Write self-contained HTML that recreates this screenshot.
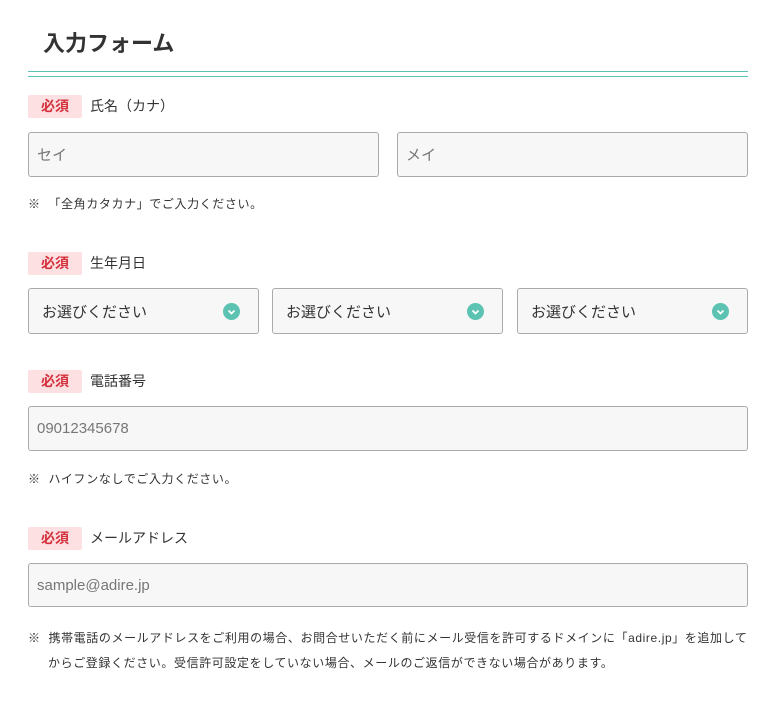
<!DOCTYPE html>
<html><head><meta charset="utf-8"><style>
*{margin:0;padding:0;box-sizing:border-box}
body{width:776px;height:701px;background:#fff;font-family:"Liberation Sans","Noto Sans CJK JP",sans-serif;color:#333;position:relative;overflow:hidden}
h1{position:absolute;left:43px;top:26px;font-size:22px;font-weight:bold;color:#333}
.line{position:absolute;left:28px;width:720px;height:1px;background:#5cc3b2}
.badge{position:absolute;left:28px;width:54px;height:23px;background:#fde0e2;color:#d3323d;font-weight:bold;font-size:14px;line-height:23px;text-align:center;border-radius:2px}
.lbl{position:absolute;left:90px;font-size:14px;line-height:23px;color:#333}
.inp{position:absolute;background:#f7f7f7;border:1px solid #aaa;border-radius:3px;font-size:15px;color:#777;padding-left:8px;display:flex;align-items:center}
.sel{color:#333;padding-left:13px}
.ic{position:absolute;right:18px;top:14px;width:17px;height:17px;border-radius:50%;background:#5cc3b2}
.note{position:absolute;left:28px;font-size:12px;color:#333;letter-spacing:0.6px}
</style></head><body>
<h1>入力フォーム</h1>
<div class="line" style="top:71px"></div>
<div class="line" style="top:76px"></div>

<div class="badge" style="top:95px">必須</div><div class="lbl" style="top:95px">氏名（カナ）</div>
<div class="inp" style="left:28px;top:132px;width:351px;height:45px">セイ</div>
<div class="inp" style="left:397px;top:132px;width:351px;height:45px">メイ</div>
<div class="note" style="top:195px">※&nbsp;&nbsp;「全角カタカナ」でご入力ください。</div>

<div class="badge" style="top:252px">必須</div><div class="lbl" style="top:252px">生年月日</div>
<div class="inp sel" style="left:28px;top:288px;width:231px;height:46px">お選びください<span class="ic"><svg width="17" height="17"><path d="M5.5 7.5L8.5 10.5L11.5 7.5" stroke="#fff" stroke-width="1.8" fill="none"/></svg></span></div>
<div class="inp sel" style="left:272px;top:288px;width:231px;height:46px">お選びください<span class="ic"><svg width="17" height="17"><path d="M5.5 7.5L8.5 10.5L11.5 7.5" stroke="#fff" stroke-width="1.8" fill="none"/></svg></span></div>
<div class="inp sel" style="left:517px;top:288px;width:231px;height:46px">お選びください<span class="ic"><svg width="17" height="17"><path d="M5.5 7.5L8.5 10.5L11.5 7.5" stroke="#fff" stroke-width="1.8" fill="none"/></svg></span></div>

<div class="badge" style="top:370px">必須</div><div class="lbl" style="top:370px">電話番号</div>
<div class="inp" style="left:28px;top:406px;width:720px;height:45px">09012345678</div>
<div class="note" style="top:470px">※&nbsp;&nbsp;ハイフンなしでご入力ください。</div>

<div class="badge" style="top:527px">必須</div><div class="lbl" style="top:527px">メールアドレス</div>
<div class="inp" style="left:28px;top:563px;width:720px;height:44px">sample@adire.jp</div>
<div class="note" style="top:626px;line-height:25px">※&nbsp;&nbsp;携帯電話のメールアドレスをご利用の場合、お問合せいただく前にメール受信を許可するドメインに「adire.jp」を追加して<br><span style="padding-left:20px">からご登録ください。受信許可設定をしていない場合、メールのご返信ができない場合があります。</span></div>
</body></html>
